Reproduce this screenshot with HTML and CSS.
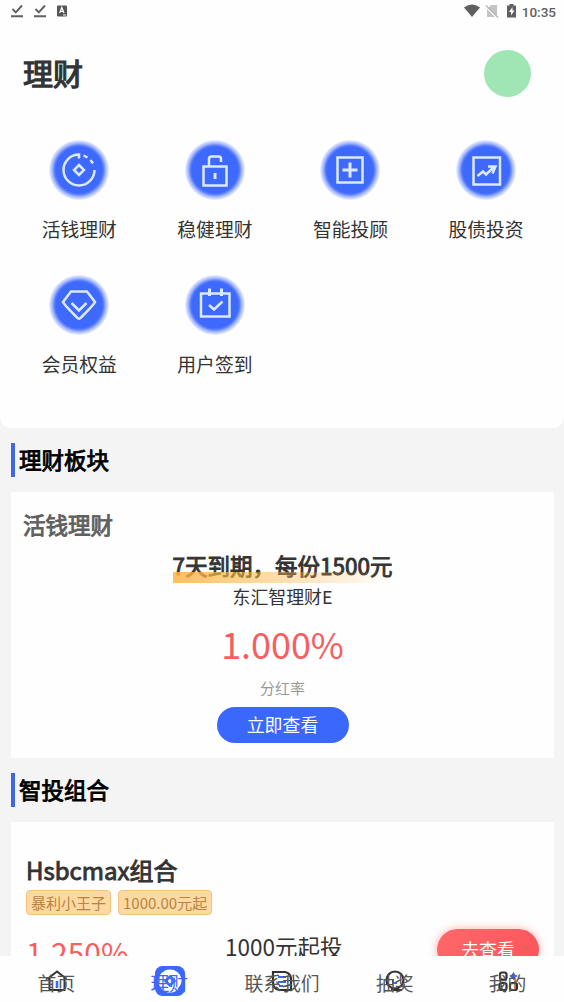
FILE: index.html
```html
<!DOCTYPE html>
<html lang="zh-CN">
<head>
<meta charset="utf-8">
<title>理财</title>
<link rel="stylesheet" href="styles.css">
</head>
<body>
<div class="app">
  <section class="top">
    <div class="status">
      <svg class="status-left" width="60" height="16" viewBox="0 0 60 16" fill="none" stroke="#606060" stroke-width="1.900">
        <path d="M2.500 6l3.300 3.300L12 2.500M1 13.200h12M25.500 6l3.300 3.300L35 2.500M24 13.200h12"/>
        <rect x="47" y="2.500" width="10" height="11" rx="1" fill="#555" stroke="none"/>
        <path d="M49.700 10l2.100-5.500L54 10M50.500 8.300h2.600M53 12h3" stroke="#fff" stroke-width="1.200"/>
      </svg>
      <div class="status-right">
        <svg width="54" height="16" viewBox="0 0 54 16">
          <path d="M1 4.500Q9 -1.500 17 4.500L9 14z" fill="#606060"/>
          <path d="M28 2h6v11L25 5zM24 6l8 8h-8z" fill="#c4c4c4"/>
          <path d="M23 2.500L35 14.500" stroke="#b5b5b5" stroke-width="1.200"/>
          <path d="M44 2.500h2.500V1h4v1.500H53V14.500h-9z" fill="#606060"/>
          <path d="M49.500 4L46 9h2v3.500L51.500 7.500h-2z" fill="#fff"/>
        </svg>
        <span>10:35</span>
      </div>
    </div>
    <header class="header"><h1>理财</h1><div class="avatar"></div></header>
    <nav class="grid">
      <a class="entry"><span class="disc"><svg viewBox="0 0 60 60"><path d="M30 18.500V14.500A15.500 15.500 0 1 0 45.500 30M34.500 15.500l4 2M41.500 20l2.500 3.500"/><path d="M30 25l5 5-5 5-5-5z"/></svg></span><span>活钱理财</span></a>
      <a class="entry"><span class="disc"><svg viewBox="0 0 60 60"><path d="M18.500 26.500h23v19h-23zM24 26.500V19q0-2.500 2.500-2.500h7Q36 16.500 36 19v3"/><path d="M30 33v6" stroke-width="3"/></svg></span><span>稳健理财</span></a>
      <a class="entry"><span class="disc"><svg viewBox="0 0 60 60"><path d="M17.500 17.500h25v25h-25z"/><path d="M30 22.500v15M22.500 30h15" stroke-width="3"/></svg></span><span>智能投顾</span></a>
      <a class="entry"><span class="disc"><svg viewBox="0 0 60 60"><path d="M17.500 17.500h26.500v27H17.500zM21.500 36l5.500-4.500 3 3L38.500 26.500M32 26.500h7.500l-3 7"/></svg></span><span>股债投资</span></a>
      <a class="entry"><span class="disc"><svg viewBox="0 0 60 60"><path d="M22 16.500h16l8 10.500Q45 29.500 32 42.500 30 45 28 42.500 15 29.500 14 27z"/><path d="M22.500 28l7.500 7.500 7.500-7.500"/></svg></span><span>会员权益</span></a>
      <a class="entry"><span class="disc"><svg viewBox="0 0 60 60"><path d="M16 18.500h28.500v23H16zM24 30l5 4.500 8.500-8"/><path d="M24.500 13.500v7.500M36.500 13.500v7.500" stroke-width="3"/></svg></span><span>用户签到</span></a>
    </nav>
  </section>

  <h2 class="section-title">理财板块</h2>
  <section class="card product">
    <h3>活钱理财</h3>
    <div class="term">7天到期，每份1500元</div>
    <div class="name">东汇智理财E</div>
    <div class="rate">1.000%</div>
    <div class="rate-label">分红率</div>
    <button class="view">立即查看</button>
  </section>

  <h2 class="section-title">智投组合</h2>
  <section class="card combo">
    <h3>Hsbcmax组合</h3>
    <div class="tags"><span>暴利小王子</span><span>1000.00元起</span></div>
    <div class="combo-row">
      <div class="combo-rate">1.250%</div>
      <div class="combo-min">1000元起投</div>
      <button class="go">去查看</button>
    </div>
  </section>

  <nav class="tabs">
    <a class="tab"><svg viewBox="0 0 32 32" fill="none"><path d="M6.500 14L16 6.500l9.500 7.500M8.500 13v12h15V13" stroke="#333" stroke-width="2"/><path d="M16 16v7" stroke="#3b68fc" stroke-width="2.600"/></svg><span>首页</span></a>
    <a class="tab active"><svg viewBox="0 0 32 32"><rect x="1" y="1" width="30" height="30" rx="7.500" fill="#3b68fc"/><circle cx="16" cy="16" r="11.500" fill="#fff"/><path d="M16 11.500l4.500 4.500-4.500 4.500-4.500-4.500z" fill="none" stroke="#3b68fc" stroke-width="2.500"/></svg><span>理财</span></a>
    <a class="tab"><svg viewBox="0 0 32 32" fill="none"><path d="M7 7h12q6 1 6 8v10H13q-6-1-6-8z" stroke="#333" stroke-width="2.200"/><path d="M12 12h8M12 17h8M13 21h4" stroke="#3b68fc" stroke-width="2"/></svg><span>联系我们</span></a>
    <a class="tab"><svg viewBox="0 0 32 32" fill="none"><circle cx="16" cy="15" r="8.500" stroke="#333" stroke-width="2.200"/><path d="M12 25h11" stroke="#333" stroke-width="2"/><path d="M14 14v4h4" stroke="#3b68fc" stroke-width="2"/></svg><span>抽奖</span></a>
    <a class="tab"><svg viewBox="0 0 32 32" fill="none" stroke="#333" stroke-width="2.200"><rect x="8" y="7.500" width="6.500" height="7" rx="2"/><rect x="7.500" y="18" width="7" height="7" rx="2"/><rect x="18" y="18" width="7" height="7" rx="2"/><path d="M21.500 7.500l1.200 2.500 2.500 1-2.500 1-1.200 2.500-1.200-2.500-2.500-1 2.500-1z" fill="#3b68fc" stroke="#3b68fc" stroke-width="1"/></svg><span>我的</span></a>
  </nav>
</div>
</body>
</html>
```
FILE: styles.css
```css
* { box-sizing: border-box; }
body {
  margin: 0;
  background: #f4f4f4;
  color: #333;
  font-family: "Noto Sans CJK SC", sans-serif;
}
h1, h2, h3 { margin: 0; }
h1, h2, h3, .term { font-weight: 400; -webkit-text-stroke: 0.9px currentColor; }
button { border: 0; padding: 0; font-family: inherit; color: #fff; }
.app { height: 1002px; overflow: hidden; display: flex; flex-direction: column; }
.top { height: 428px; flex: none; background: #fefefe; border-radius: 0 0 11px 11px; }
.status { height: 24px; display: flex; justify-content: space-between; padding: 3px 8px 0 10px; }
.status-right { display: flex; gap: 5px; font: 500 13.5px/18px Roboto, sans-serif; color: #606060; }
.header { height: 98px; display: flex; justify-content: space-between; align-items: center; padding: 0 33px 0 23px; }
.header h1 { font-size: 30px; line-height: 44px; padding-bottom: 2px; -webkit-text-stroke-width: 1.2px; }
.avatar { width: 47px; height: 47px; border-radius: 50%; background: #a0e6b4; }
.grid { display: grid; grid-template-columns: repeat(4, 135.600px); grid-auto-rows: 135px; padding: 18px 11px 0 11.500px; }
.entry { display: flex; flex-direction: column; align-items: center; font-size: 18.800px; line-height: 28px; gap: 14.500px; }
.disc { width: 60px; height: 60px; border-radius: 50%; background: radial-gradient(circle, #3d69fc 23px, #5a7dfb 24.500px, #a9bcfd 27px, #edf1fe 30px); }
.disc svg { display: block; width: 60px; height: 60px; fill: none; stroke: #dce9fe; stroke-width: 2.500; }
.section-title { flex: none; height: 34px; margin: 15px 0 14.500px 11px; border-left: 4px solid #3f66e8; padding-left: 4px; font-size: 22.500px; line-height: 33px; color: #000; }
.card { flex: none; margin: 0 10px 0 11px; background: #fefefe; }
.product { height: 266.500px; display: flex; flex-direction: column; align-items: center; padding-top: 15px; }
.product h3 { align-self: stretch; padding-left: 12px; font-size: 22.500px; line-height: 34px; color: #606060; }
.term { margin-top: 7px; height: 34px; font-size: 22.500px; line-height: 34px; position: relative; }
.term::after { content: ""; position: absolute; left: 0; right: 0; top: 24px; height: 11px; background: linear-gradient(90deg, #ffb547dd, #ffb54700); }
.name { margin-top: 1px; font-size: 17.900px; line-height: 26px; }
.rate { margin-top: 6px; font-size: 35.900px; line-height: 56px; color: #f85d60; }
.rate-label { margin-top: 6px; font-size: 15px; line-height: 22px; color: #999; }
.view { margin-top: 8px; width: 132px; height: 36px; border-radius: 18px; background: #3b68fc; font-size: 17.900px; line-height: 35px; }
.combo { height: 240px; padding: 30px 15px 0; }
.combo h3 { font-size: 24px; line-height: 36px; }
.tags { display: flex; gap: 7px; margin-top: 2px; }
.tags span { height: 25px; padding: 0 4px; border: 1px solid #f5c27c; border-radius: 4px; background: #ffd9a2; color: #b98442; font-size: 15px; line-height: 23px; }
.combo-row { display: grid; grid-template-columns: 199px 212px 102px; align-items: start; margin-top: 14px; }
.combo-rate { font-size: 30px; line-height: 46px; color: #f85d60; }
.combo-min { font-size: 22.500px; line-height: 35px; }
.go { width: 102px; height: 41px; border-radius: 21px; background: linear-gradient(135deg, #ff6969, #f95459); box-shadow: 0 0 8px #ff777799; font-size: 17.800px; line-height: 41px; }
.tabs { position: fixed; left: 0; right: 0; bottom: 0; height: 46px; display: grid; grid-template-columns: repeat(5, 1fr); background: #fefefe; }
.tab { position: relative; text-align: center; font-size: 18.800px; line-height: 53px; color: #555; }
.tab svg { position: absolute; width: 32px; height: 32px; left: calc(50% - 15.500px); top: 9px; }
.tab span { position: relative; }
.active { color: #3b68fc; }
```
